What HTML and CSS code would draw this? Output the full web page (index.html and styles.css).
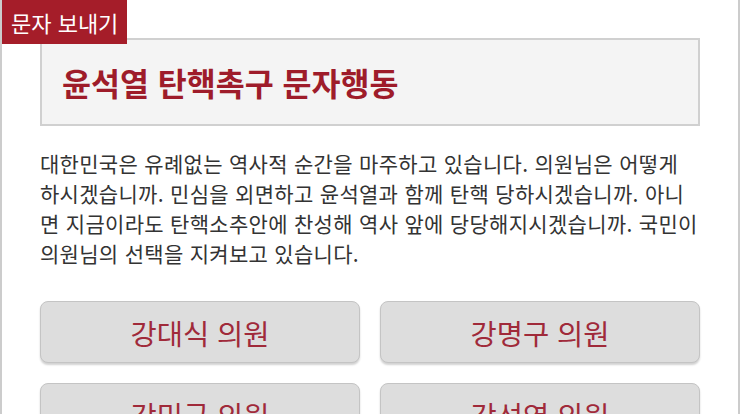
FILE: index.html
```html
<!DOCTYPE html>
<html lang="ko">
<head>
    <meta charset="UTF-8">
    <meta name="viewport" content="width=device-width, initial-scale=1.0">
    <title>문자 보내기</title>
    <link rel="stylesheet" href="styles.css">
</head>
<body>
    <div class="panel">
        <div class="tab">문자 보내기</div>

        <div class="title-box">
            <h1>윤석열 탄핵촉구 문자행동</h1>
        </div>

        <p class="message">대한민국은 유례없는 역사적 순간을 마주하고 있습니다. 의원님은 어떻게 하시겠습니까. 민심을 외면하고 윤석열과 함께 탄핵 당하시겠습니까. 아니면 지금이라도 탄핵소추안에 찬성해 역사 앞에 당당해지시겠습니까. 국민이 의원님의 선택을 지켜보고 있습니다.</p>

        <div class="members">
            <button class="member">강대식 의원</button>
            <button class="member">강명구 의원</button>
            <button class="member">강민국 의원</button>
            <button class="member">강선영 의원</button>
        </div>
    </div>
</body>
</html>
```

FILE: styles.css
```css
body {
    margin: 0;
    font-family: "Noto Sans CJK KR", "Noto Sans", sans-serif;
    background: #ffffff;
}

.panel {
    position: relative;
    box-sizing: border-box;
    width: 740px;
    min-height: 100vh;
    padding: 38px 38px 40px;
    border-left: 2px solid #cccccc;
    border-right: 2px solid #cccccc;
}

/* label tab sitting over the top-left corner */
.tab {
    position: absolute;
    top: 0;
    left: 0;
    height: 44px;
    padding: 0 9px;
    display: flex;
    align-items: center;
    background: #a51d29;
    color: #ffffff;
    font-size: 22px;
    z-index: 2;
}

.title-box {
    box-sizing: border-box;
    height: 88px;
    display: flex;
    align-items: center;
    padding: 0 20px;
    background: #f4f4f4;
    border: 2px solid #d0d0d0;
}

.title-box h1 {
    margin: 0;
    font-size: 31.5px;
    font-weight: bold;
    color: #9e1c2a;
}

.message {
    margin: 22px 0 0;
    font-size: 21px;
    line-height: 30px;
    letter-spacing: 0.3px;
    color: #333333;
}

.members {
    display: grid;
    grid-template-columns: 1fr 1fr;
    gap: 20px;
    margin-top: 33px;
}

.member {
    height: 62px;
    border: 1px solid #c4c4c4;
    border-radius: 8px;
    background: #dddddd;
    box-shadow: 0 2px 2px rgba(0, 0, 0, 0.18);
    color: #a02a3a;
    font-family: inherit;
    font-size: 28.5px;
    cursor: pointer;
}

.member:hover {
    background: #d2d2d2;
}
```
